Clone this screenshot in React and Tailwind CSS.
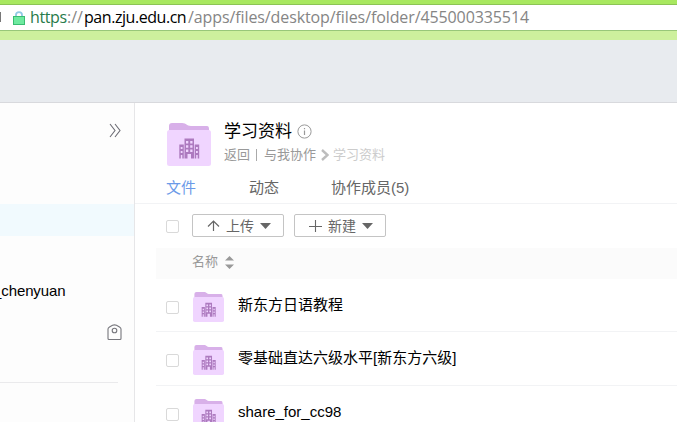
const Folder = ({ className }) => (
  <svg viewBox="0 0 44 43" className={className} preserveAspectRatio="none">
    <path d="M2 12V3Q2 0 5 0H15C20 0 19 3 24 3H40Q42 3 42 6V12Z" fill="#d8b0e9" />
    <rect y="7" width="44" height="36" rx="2.5" fill="#f0d5ff" />
    <path
      fillRule="evenodd"
      d="M17.500 15.500H27V35.500H24V31H20.500V35.500H17.500ZM19 18h2.300v2.500h-2.300zM23.200 18h2.300v2.500h-2.300zM19 22.200h2.300v2.500h-2.300zM23.200 22.200h2.300v2.500h-2.300zM19 26.400h2.300v2.500h-2.300zM23.200 26.400h2.300v2.500h-2.300zM12.300 21.500H16.800V35.500H15.300V32H13.800V35.500H12.300ZM13.700 24h1.800v2h-1.800zM13.700 28h1.800v2h-1.800zM27.700 21.500H32.200V35.500H30.700V32H29.200V35.500H27.700ZM29 24h1.800v2h-1.800zM29 28h1.800v2h-1.800z"
      fill="#ad7abf"
    />
  </svg>
);

const Box = () => <span className="block h-[13px] w-[13px] shrink-0 rounded-[2px] border border-[#d9d9d9] bg-white" />;

const Caret = () => (
  <svg width="11" height="6" className="ml-[6px] shrink-0">
    <path d="M0 0H11L5.5 6Z" fill="#666" />
  </svg>
);

const files = [
  { name: "新东方日语教程", row: "h-[53px]" },
  { name: "零基础直达六级水平[新东方六级]", row: "h-[54px]" },
  { name: "share_for_cc98", row: "h-[54px]" },
];

export default function App() {
  return (
    <div className="flex h-[422px] w-[677px] flex-col overflow-hidden bg-white font-['Liberation_Sans','Noto_Sans_CJK_SC',sans-serif] text-[15px] text-black">
      <div className="h-[5px] shrink-0 border-b border-[#8cc455] bg-[#a8e85f]" />
      <div className="flex h-[26px] shrink-0 items-center overflow-hidden border-b border-[#98c779] bg-white font-['Open_Sans','Noto_Sans',sans-serif] text-[16px] leading-[25px] whitespace-pre">
        <span className="h-[10px] w-[1px] -translate-y-[1px] bg-[#777]" />
        <svg width="12" height="14" viewBox="0 0 12 14" className="ml-[12px] shrink-0">
          <path d="M3 7V3.8Q3 1.2 6 1.2T9 3.8V7" fill="none" stroke="#91c9e5" strokeWidth="1.8" />
          <rect x="0.5" y="5.5" width="11" height="8" fill="#6eea9f" stroke="#39bd72" />
        </svg>
        <span className="ml-[5px] w-[37px] shrink-0 tracking-[-0.4px] text-[#287b4a]">https</span>
        <span className="w-[17px] shrink-0 text-[#858585]">://</span>
        <span className="w-[104px] shrink-0 tracking-[-0.45px] text-black">pan.zju.edu.cn</span>
        <span className="tracking-[-0.1px] text-[#858585]">/apps/files/desktop/files/folder/455000335514</span>
      </div>
      <div className="h-[9px] shrink-0 bg-[#cdf09d]" />
      <div className="h-[63px] shrink-0 border-b border-[#d8d9dd] bg-[#e8ebef]" />

      <div className="flex min-h-0 flex-1">
        <aside className="flex w-[135px] shrink-0 flex-col overflow-hidden border-r border-[#e6e6e8] bg-[#fdfdfd]">
          <div className="flex h-[101px] shrink-0 justify-end pt-[20px] pr-[13px]">
            <svg width="12" height="15" fill="none" stroke="#6c6c74" strokeWidth="1.1">
              <path d="M1 1L6 7.5L1 14M6 1L11 7.5L6 14" />
            </svg>
          </div>
          <div className="h-[32px] shrink-0 bg-[#f1fafe]" />
          <div className="mt-[45px] h-[20px] shrink-0 text-[15px] leading-[20px]">
            <span className="-ml-[7px] inline-block tracking-[-0.1px]">_chenyuan</span>
          </div>
          <div className="mt-[23px] flex h-[17px] shrink-0 justify-end pr-[12px]">
            <svg width="15" height="17" fill="none" stroke="#77777d" strokeWidth="1.1">
              <path d="M1 14.5V5Q1 4 2.5 3L5.5 1.2Q7.5.5 9.5 1.2L12.5 3Q14 4 14 5V14.5Q14 15.5 13 15.5H2Q1 15.5 1 14.5Z" />
              <circle cx="7.5" cy="6.5" r="2.3" />
            </svg>
          </div>
          <div className="mt-[41px] mr-[16px] h-px shrink-0 bg-[#eaeaec]" />
        </aside>

        <main className="flex min-w-0 flex-1 flex-col">
          <header className="flex h-[68px] shrink-0 pt-[20px] pl-[32px]">
            <Folder className="h-[43px] w-[44px] shrink-0" />
            <div className="ml-[13px] -mt-[2px]">
              <div className="flex h-[22px] items-center text-[17px] leading-[22px]">
                <span>学习资料</span>
                <svg width="15" height="15" className="mb-px ml-[5px]" fill="none" stroke="#999">
                  <circle cx="7.5" cy="7.5" r="6.6" />
                  <path d="M7.5 6.5V11M7.5 4V5.3" strokeWidth="1.2" />
                </svg>
              </div>
              <div className="mt-[2px] flex h-[20px] items-center text-[13px] leading-[20px] text-[#999]">
                <span>返回</span>
                <span className="mr-[5px] ml-[6px] h-[12px] w-px bg-[#aaa]" />
                <span className="ml-[2px]">与我协作</span>
                <svg width="8" height="12" className="mr-[4px] ml-[5px]" fill="none" stroke="#bdbdbd" strokeWidth="2.4">
                  <path d="M1 1L6.500 6L1 11" />
                </svg>
                <span className="text-[#ccc]">学习资料</span>
              </div>
            </div>
          </header>
          <nav className="flex h-[33px] shrink-0 border-b border-[#f2f3f5] pt-[7px] pl-[31px] text-[15px] leading-[20px] text-[#666]">
            <span className="w-[83px] text-[#6b9ae8]">文件</span>
            <span className="w-[82px]">动态</span>
            <span>协作成员(5)</span>
          </nav>

          <div className="flex h-[44px] shrink-0 items-start pt-[10px] pl-[31px]">
            <div className="mt-[6px]">
              <Box />
            </div>
            <button className="ml-[13px] flex h-[23px] w-[92px] items-center rounded-[2px] border border-[#c4c4c4] pl-[14px] text-[14px] leading-[20px] text-[#666]">
              <svg width="13" height="11" className="mr-[6px] shrink-0" fill="none" stroke="#666" strokeWidth="1.2">
                <path d="M6.5 11V1M1 6.5L6.5 1L12 6.5" />
              </svg>
              上传
              <Caret />
            </button>
            <button className="ml-[10px] flex h-[23px] w-[92px] items-center rounded-[2px] border border-[#c4c4c4] pl-[14px] text-[14px] leading-[20px] text-[#666]">
              <svg width="13" height="12" className="mr-[6px] shrink-0" fill="none" stroke="#666" strokeWidth="1.1">
                <path d="M6.500 0V12M0 6.500H13" />
              </svg>
              新建
              <Caret />
            </button>
          </div>

          <div className="ml-[21px] flex h-[31px] shrink-0 items-center bg-[#fbfbfb] pb-[3px] pl-[36px] text-[13px] leading-[20px] text-[#999]">
            名称
            <svg width="9" height="13" className="ml-[7px]" fill="#999">
              <path d="M0 4.500L4.500 0L9 4.500ZM0 8.500H9L4.500 13Z" />
            </svg>
          </div>

          {files.map(({ name, row }) => (
            <div key={name} className={`ml-[21px] flex shrink-0 items-start border-b border-[#f2f3f5] pl-[10px] ${row}`}>
              <div className="mt-[22px]">
                <Box />
              </div>
              <Folder className="mt-[13px] ml-[14px] h-[30px] w-[31px] shrink-0" />
              <div className="ml-[14px] pt-[15px] leading-[22px]">{name}</div>
            </div>
          ))}
        </main>
      </div>
    </div>
  );
}
